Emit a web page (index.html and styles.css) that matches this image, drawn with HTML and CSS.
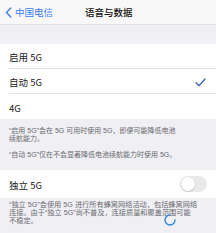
FILE: index.html
```html
<!DOCTYPE html>
<html lang="zh">
<head>
<meta charset="utf-8">
<link rel="stylesheet" href="styles.css">
</head>
<body>
<div class="page">
  <div class="nav">
    <div class="back">
      <svg class="chev" width="7" height="11" viewBox="0 0 7 11"><path d="M5.8 1 L1.5 5.5 L5.8 10" fill="none" stroke="#3a7bf0" stroke-width="1.3" stroke-linecap="round" stroke-linejoin="round"/></svg>
      <span>中国电信</span>
    </div>
    <div class="title">语音与数据</div>
  </div>
  <div class="gap"></div>
  <div class="group">
    <div class="row"><span>启用 5G</span></div>
    <div class="row"><span>自动 5G</span>
      <svg class="check" width="11" height="9" viewBox="0 0 11 9"><path d="M1 4.8 L4 7.8 L10 1" fill="none" stroke="#3b66b0" stroke-width="1.3" stroke-linecap="round" stroke-linejoin="round"/></svg>
    </div>
    <div class="row last"><span>4G</span></div>
  </div>
  <div class="foot foot1">
    <p>“启用 5G”会在 5G 可用时使用 5G，即便可能降低电池<br>续航能力。</p>
    <p>“自动 5G”仅在不会显著降低电池续航能力时使用 5G。</p>
  </div>
  <div class="group">
    <div class="row tall last"><span>独立 5G</span><div class="toggle"><div class="knob"></div></div></div>
  </div>
  <div class="foot foot2">
    <p>“独立 5G”会使用 5G 进行所有蜂窝网络活动，包括蜂窝网络<br>连接。由于“独立 5G”尚不普及，连接质量和覆盖范围可能<br>不稳定。</p>
  </div>
  <svg class="spinner" width="14" height="14" viewBox="0 0 14 14"><path d="M12 7 A5 5 0 1 1 7 2" fill="none" stroke="#2f86d8" stroke-width="1.4" stroke-linecap="round"/></svg>
</div>
</body>
</html>
```
FILE: styles.css
```css
* { box-sizing: border-box; }
html, body { margin: 0; padding: 0; }
body {
  width: 216px;
  height: 233px;
  overflow: hidden;
  background: #efeff4;
  font-family: "Noto Sans CJK SC", "Noto Sans", sans-serif;
  color: #1c1c1e;
}
.page { position: relative; width: 216px; height: 233px; }
.nav {
  height: 25px;
  background: #f8f8f8;
  border-bottom: 1px solid #e2e2e4;
  display: flex;
  align-items: center;
  position: relative;
}
.back {
  display: flex;
  align-items: center;
  gap: 3px;
  padding-left: 5px;
  color: #3a7bf0;
  font-size: 9.5px;
}
.title {
  position: absolute;
  left: 85px;
  top: 0;
  height: 24px;
  line-height: 24px;
  font-size: 9.5px;
  font-weight: 500;
  color: #111;
}
.gap { height: 19px; }
.group { background: #fff; }
.row {
  height: 25px;
  margin-left: 9px;
  padding-right: 10px;
  border-bottom: 1px solid #e4e4e6;
  display: flex;
  align-items: center;
  justify-content: space-between;
  font-size: 9.5px;
  color: #222;
}
.row span { padding-top: 2px; }
.row.last { border-bottom: none; }
.row.tall { height: 28px; }
.check { margin-top: 2px; }
.foot {
  color: #6b6b70;
  font-family: "Liberation Sans", "Noto Sans CJK SC", sans-serif;
  font-size: 7px;
  line-height: 8px;
  padding: 8px 0 0 9px;
  white-space: nowrap;
}
.foot p { margin: 0 0 8px 0; }
.foot1 { height: 51px; }
.foot2 { padding-top: 3px; font-size: 7.2px; }
.toggle {
  width: 27px;
  height: 16px;
  border-radius: 8px;
  background: #e9e9eb;
  position: relative;
  margin-right: -1px;
}
.knob {
  position: absolute;
  left: 1px;
  top: 1px;
  width: 14px;
  height: 14px;
  border-radius: 50%;
  background: #fff;
  box-shadow: 0 0.5px 1.5px rgba(0,0,0,0.25);
}
.spinner { position: absolute; left: 163px; top: 213px; }
```
